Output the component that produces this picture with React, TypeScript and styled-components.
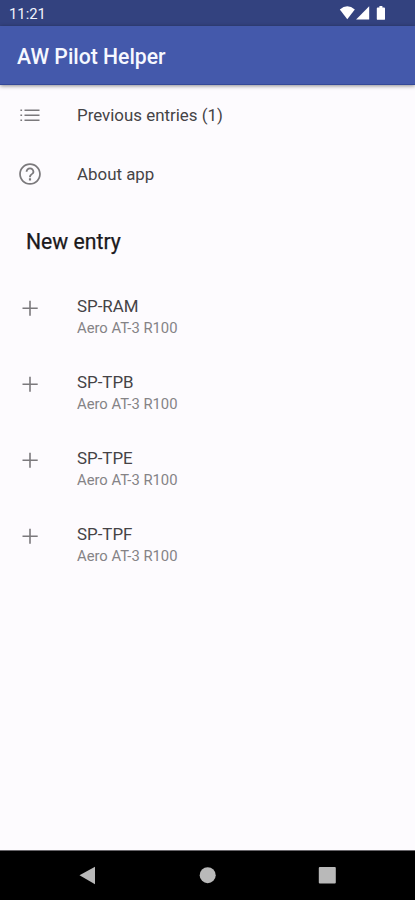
import React from "react";
import styled, { createGlobalStyle } from "styled-components";

const GlobalStyle = createGlobalStyle`
  * { box-sizing: border-box; }
  body { margin: 0; background: #fdfbfe; font-family: Roboto, sans-serif; }
`;

const Screen = styled.div`
  display: flex;
  flex-direction: column;
  width: 415px;
  height: 900px;
  overflow: hidden;
  background: #fdfbfe;
`;

const StatusBar = styled.div`
  display: flex;
  flex: none;
  justify-content: space-between;
  height: 26px;
  padding: 0 28px 0 9px;
  background: #33427f;
  color: #f1f3fb;
`;

const Clock = styled.span`
  font-size: 14.8px;
  line-height: 28px;
`;

const StatusIcons = styled.svg`
  display: block;
  width: 48px;
  height: 26px;
  fill: #fff;
`;

const AppBar = styled.header`
  flex: none;
  height: 59px;
  padding-left: 17px;
  background: #4459ab;
  border-bottom: 1px solid #344898;
  box-shadow: 0 1px 4px rgba(0, 0, 0, 0.45);
`;

const Title = styled.h1`
  margin: 0;
  font-size: 21.2px;
  font-weight: 500;
  line-height: 62px;
  color: #f6f8ff;
`;

const Content = styled.main`
  flex: 1;
`;

const Row = styled.div<{ $height: number }>`
  display: grid;
  grid-template-columns: 60px 1fr;
  align-items: center;
  height: ${(p) => p.$height}px;
  padding-left: 17px;
`;

const AircraftRow = styled(Row)`
  align-items: start;
  padding-top: 17px;
`;

const RowIcon = styled.svg`
  display: block;
  width: 26px;
  height: 26px;
  fill: #7b797c;
`;

const Label = styled.div`
  font-size: 16.9px;
  line-height: 22px;
  color: #454346;
`;

const Detail = styled.div`
  font-size: 14.8px;
  line-height: 22px;
  color: #858386;
`;

const SectionTitle = styled.h2`
  margin: 0;
  padding: 25px 0 0 26px;
  height: 75px;
  font-size: 21.2px;
  font-weight: 400;
  line-height: 28px;
  color: #1b191c;
  -webkit-text-stroke: 0.25px #1b191c;
`;

const NavBar = styled.nav`
  flex: none;
  height: 50px;
  background: #000;
  border-top: 1px solid #68666a;
`;

const NavIcons = styled.svg`
  display: block;
  width: 415px;
  height: 49px;
  fill: #b9b9b9;
`;

const aircraft = ["SP-RAM", "SP-TPB", "SP-TPE", "SP-TPF"];

export default function App() {
  return (
    <Screen>
      <GlobalStyle />
      <StatusBar>
        <Clock>11:21</Clock>
        <StatusIcons viewBox="0 0 48 26">
          <path d="M.8 9.4Q8.3 3 15.8 9.4L8.3 19.3Z" />
          <path d="M30.2 6.2v13.2H17.1Z" />
          <path d="M38.7 7.500h1.700V6h3v1.500h1.700q.9 0 .9.9v10.500q0 .9-.9.9h-6.400q-.9 0-.9-.9V8.400q0-.9.9-.9Z" />
        </StatusIcons>
      </StatusBar>
      <AppBar>
        <Title>AW Pilot Helper</Title>
      </AppBar>
      <Content>
        <Row $height={59}>
          <RowIcon viewBox="0 0 26 26">
            <path d="M3.400 7.500h1.700v1.600H3.400zM3.400 12.500h1.700v1.600H3.400zM3.400 17.500h1.700v1.600H3.400zM7.500 7.500h15v1.600h-15zM7.500 12.500h15v1.600h-15zM7.500 17.500h15v1.600h-15z" />
          </RowIcon>
          <Label>Previous entries (1)</Label>
        </Row>
        <Row $height={59}>
          <RowIcon viewBox="0 0 24 24">
            <path d="M11 18h2v-2h-2v2zm1-16C6.480 2 2 6.480 2 12s4.480 10 10 10 10-4.480 10-10S17.520 2 12 2zm0 18.400c-4.630 0-8.400-3.770-8.400-8.400S7.370 3.600 12 3.600s8.400 3.770 8.400 8.400-3.770 8.400-8.400 8.400zm0-14.400c-2.210 0-4 1.790-4 4h1.700c0-1.270 1.030-2.300 2.300-2.300s2.300 1.030 2.300 2.300c0 2-3.150 1.750-3.150 5h1.700c0-2.250 3.150-2.500 3.150-5 0-2.210-1.790-4-4-4z" />
          </RowIcon>
          <Label>About app</Label>
        </Row>
        <SectionTitle>New entry</SectionTitle>
        {aircraft.map((name) => (
          <AircraftRow key={name} $height={76}>
            <RowIcon viewBox="0 0 26 26">
              <path d="M12.200 5.700h1.600v6.700h6.900V14h-6.900v6.700h-1.600V14H5.500v-1.600h6.700z" />
            </RowIcon>
            <div>
              <Label>{name}</Label>
              <Detail>Aero AT-3 R100</Detail>
            </div>
          </AircraftRow>
        ))}
      </Content>
      <NavBar>
        <NavIcons viewBox="0 0 415 49">
          <path d="M79.500 24.200 95 15.700v17.500Z" />
          <circle cx="207.700" cy="24.200" r="8" />
          <rect x="318.800" y="16" width="17" height="16.600" rx="1" />
        </NavIcons>
      </NavBar>
    </Screen>
  );
}
